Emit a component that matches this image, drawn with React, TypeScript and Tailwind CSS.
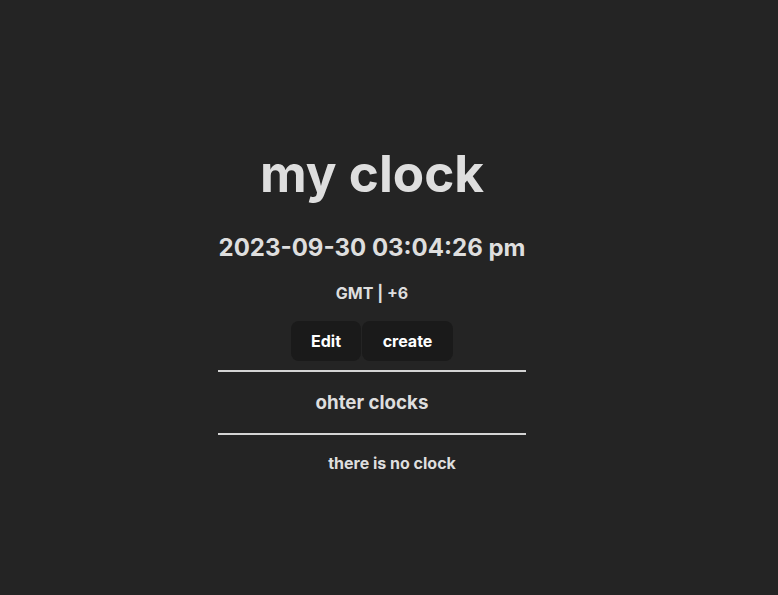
export default function App() {
  return (
    <div
      className="flex min-h-screen w-full justify-center bg-[#242424] pr-[34px] text-[#dedede]"
      style={{ fontFamily: "Inter, 'Noto Sans', sans-serif" }}
    >
      <div className="flex w-[308px] flex-col items-center pt-[145px] text-center">
        <h1 className="text-[51.2px] font-bold leading-[1.1]">my clock</h1>
        <h2 className="mt-[32px] text-[24px] font-bold leading-[29px]">2023-09-30 03:04:26 pm</h2>
        <p className="mt-[21px] text-[16px] font-bold leading-[20px]">GMT | +6</p>
        <div className="mt-[18px] flex">
          <button className="h-[40px] w-[70px] rounded-[8px] bg-[#1a1a1a] text-[16px] font-bold text-white">
            Edit
          </button>
          <button className="ml-px h-[40px] w-[91px] rounded-[8px] bg-[#1a1a1a] text-[16px] font-bold text-white">
            create
          </button>
        </div>
        <hr className="mt-[9px] w-full border-0 border-t-2 border-[#d4d4d4]" />
        <h3 className="mt-[19px] text-[18.72px] font-bold leading-[23px]">ohter clocks</h3>
        <hr className="mt-[19px] w-full border-0 border-t-2 border-[#d4d4d4]" />
        <ul className="mt-[18px] w-full pl-[40px]">
          <li className="text-[16px] font-bold leading-[20px]">there is no clock</li>
        </ul>
      </div>
    </div>
  );
}
